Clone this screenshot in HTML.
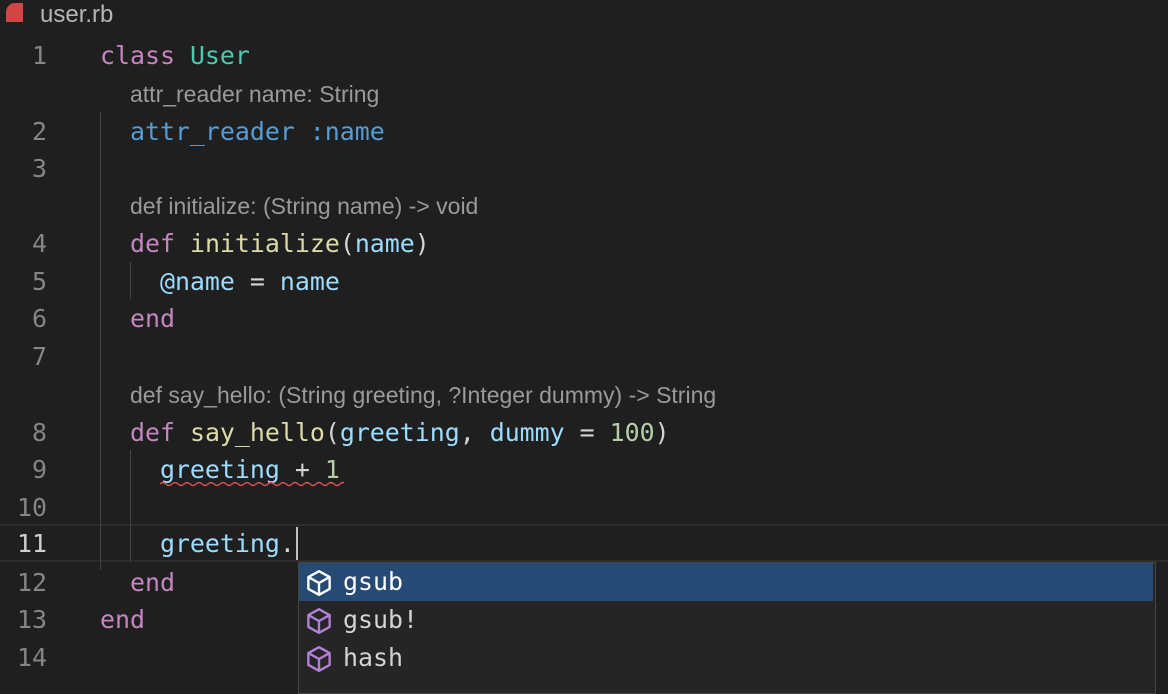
<!DOCTYPE html><html><head><style>
body{margin:0;width:1168px;height:678px;background:#1f1f1f;overflow:hidden;position:relative;font-family:"DejaVu Sans Mono","Liberation Mono",monospace;font-size:24.9px;}
.r{position:absolute;left:0;height:37px;line-height:37px;white-space:pre;color:#d4d4d4}
.n{position:absolute;left:0;width:47px;text-align:right;color:#858585}
.c{position:absolute;left:100px}
.h{position:absolute;left:130px;font-family:"Liberation Sans",sans-serif;font-size:23px;color:#9a9a9a}
.k{color:#c586c0}.t{color:#4ec9b0}.b{color:#569cd6}.v{color:#9cdcfe}.f{color:#dcdcaa}.num{color:#b5cea8}
.g{position:absolute;width:1px;background:#444}
.sug{position:absolute;left:298px;top:562px;width:856px;height:130px;background:#252526;border:1px solid #454545}
.it{position:absolute;left:0;width:854px;height:38px;line-height:38px;color:#d4d4d4}
.it svg{position:absolute;left:7px;top:7px}
.it span{position:absolute;left:44px}
</style></head><body>
<div style="position:absolute;left:6px;top:3px;width:17px;height:19px;background:#d04545;border-radius:9px 0 0 0"></div>
<div style="position:absolute;left:40px;top:1px;font-family:'Liberation Sans',sans-serif;font-size:24px;color:#b5b5b5">user.rb</div>
<div style="position:absolute;left:0;top:524px;width:1168px;height:38px;border-top:2px solid #2c2c2c;border-bottom:2px solid #2c2c2c;box-sizing:border-box"></div>
<div class="g" style="left:100px;top:112px;height:458px"></div>
<div class="g" style="left:130px;top:262px;height:37px"></div>
<div class="g" style="left:130px;top:450px;height:112px"></div>
<div style="position:absolute;left:296px;top:527px;width:2px;height:33px;background:#c0c0c0"></div>
<div class="r" style="top:37px"><span class="n">1</span><span class="c"><span class="k">class</span> <span class="t">User</span></span></div>
<div class="r" style="top:76px"><span class="h">attr_reader name: String</span></div>
<div class="r" style="top:113px"><span class="n">2</span><span class="c">  <span class="b">attr_reader :name</span></span></div>
<div class="r" style="top:150px"><span class="n">3</span></div>
<div class="r" style="top:188px"><span class="h">def initialize: (String name) -&gt; void</span></div>
<div class="r" style="top:225px"><span class="n">4</span><span class="c">  <span class="k">def</span> <span class="f">initialize</span>(<span class="v">name</span>)</span></div>
<div class="r" style="top:263px"><span class="n">5</span><span class="c">    <span class="v">@name</span> = <span class="v">name</span></span></div>
<div class="r" style="top:300px"><span class="n">6</span><span class="c">  <span class="k">end</span></span></div>
<div class="r" style="top:338px"><span class="n">7</span></div>
<div class="r" style="top:377px"><span class="h">def say_hello: (String greeting, ?Integer dummy) -&gt; String</span></div>
<div class="r" style="top:414px"><span class="n">8</span><span class="c">  <span class="k">def</span> <span class="f">say_hello</span>(<span class="v">greeting</span>, <span class="v">dummy</span> = <span class="num">100</span>)</span></div>
<div class="r" style="top:451px"><span class="n">9</span><span class="c">    <span class="v">greeting</span> + <span class="num">1</span></span></div>
<svg style="position:absolute;left:160px;top:481px" width="184" height="6"><path d="M0 3 q3 -3 6 0 t6 0 t6 0 t6 0 t6 0 t6 0 t6 0 t6 0 t6 0 t6 0 t6 0 t6 0 t6 0 t6 0 t6 0 t6 0 t6 0 t6 0 t6 0 t6 0 t6 0 t6 0 t6 0 t6 0 t6 0 t6 0 t6 0 t6 0 t6 0 t6 0 t6 0" stroke="#e05050" fill="none" stroke-width="1.3"/></svg>
<div class="r" style="top:489px"><span class="n">10</span></div>
<div class="r" style="top:525px"><span class="n" style="color:#d0d0d0">11</span><span class="c">    <span class="v">greeting</span>.</span></div>
<div class="r" style="top:564px"><span class="n">12</span><span class="c">  <span class="k">end</span></span></div>
<div class="r" style="top:601px"><span class="n">13</span><span class="c"><span class="k">end</span></span></div>
<div class="r" style="top:639px"><span class="n">14</span></div>
<div class="sug">
<div class="it" style="top:0;background:#264a73;color:#fff"><svg width="26" height="26" viewBox="1 1 22 22" fill="none" stroke="#fff" stroke-width="2" stroke-linejoin="round"><path d="M12 2 L21 7 V17 L12 22 L3 17 V7 Z M3 7 L12 12 L21 7 M12 12 V22"/></svg><span>gsub</span></div>
<div class="it" style="top:38px"><svg width="26" height="26" viewBox="1 1 22 22" fill="none" stroke="#b180d7" stroke-width="2" stroke-linejoin="round"><path d="M12 2 L21 7 V17 L12 22 L3 17 V7 Z M3 7 L12 12 L21 7 M12 12 V22"/></svg><span>gsub!</span></div>
<div class="it" style="top:76px"><svg width="26" height="26" viewBox="1 1 22 22" fill="none" stroke="#b180d7" stroke-width="2" stroke-linejoin="round"><path d="M12 2 L21 7 V17 L12 22 L3 17 V7 Z M3 7 L12 12 L21 7 M12 12 V22"/></svg><span>hash</span></div>
</div>
</body></html>
